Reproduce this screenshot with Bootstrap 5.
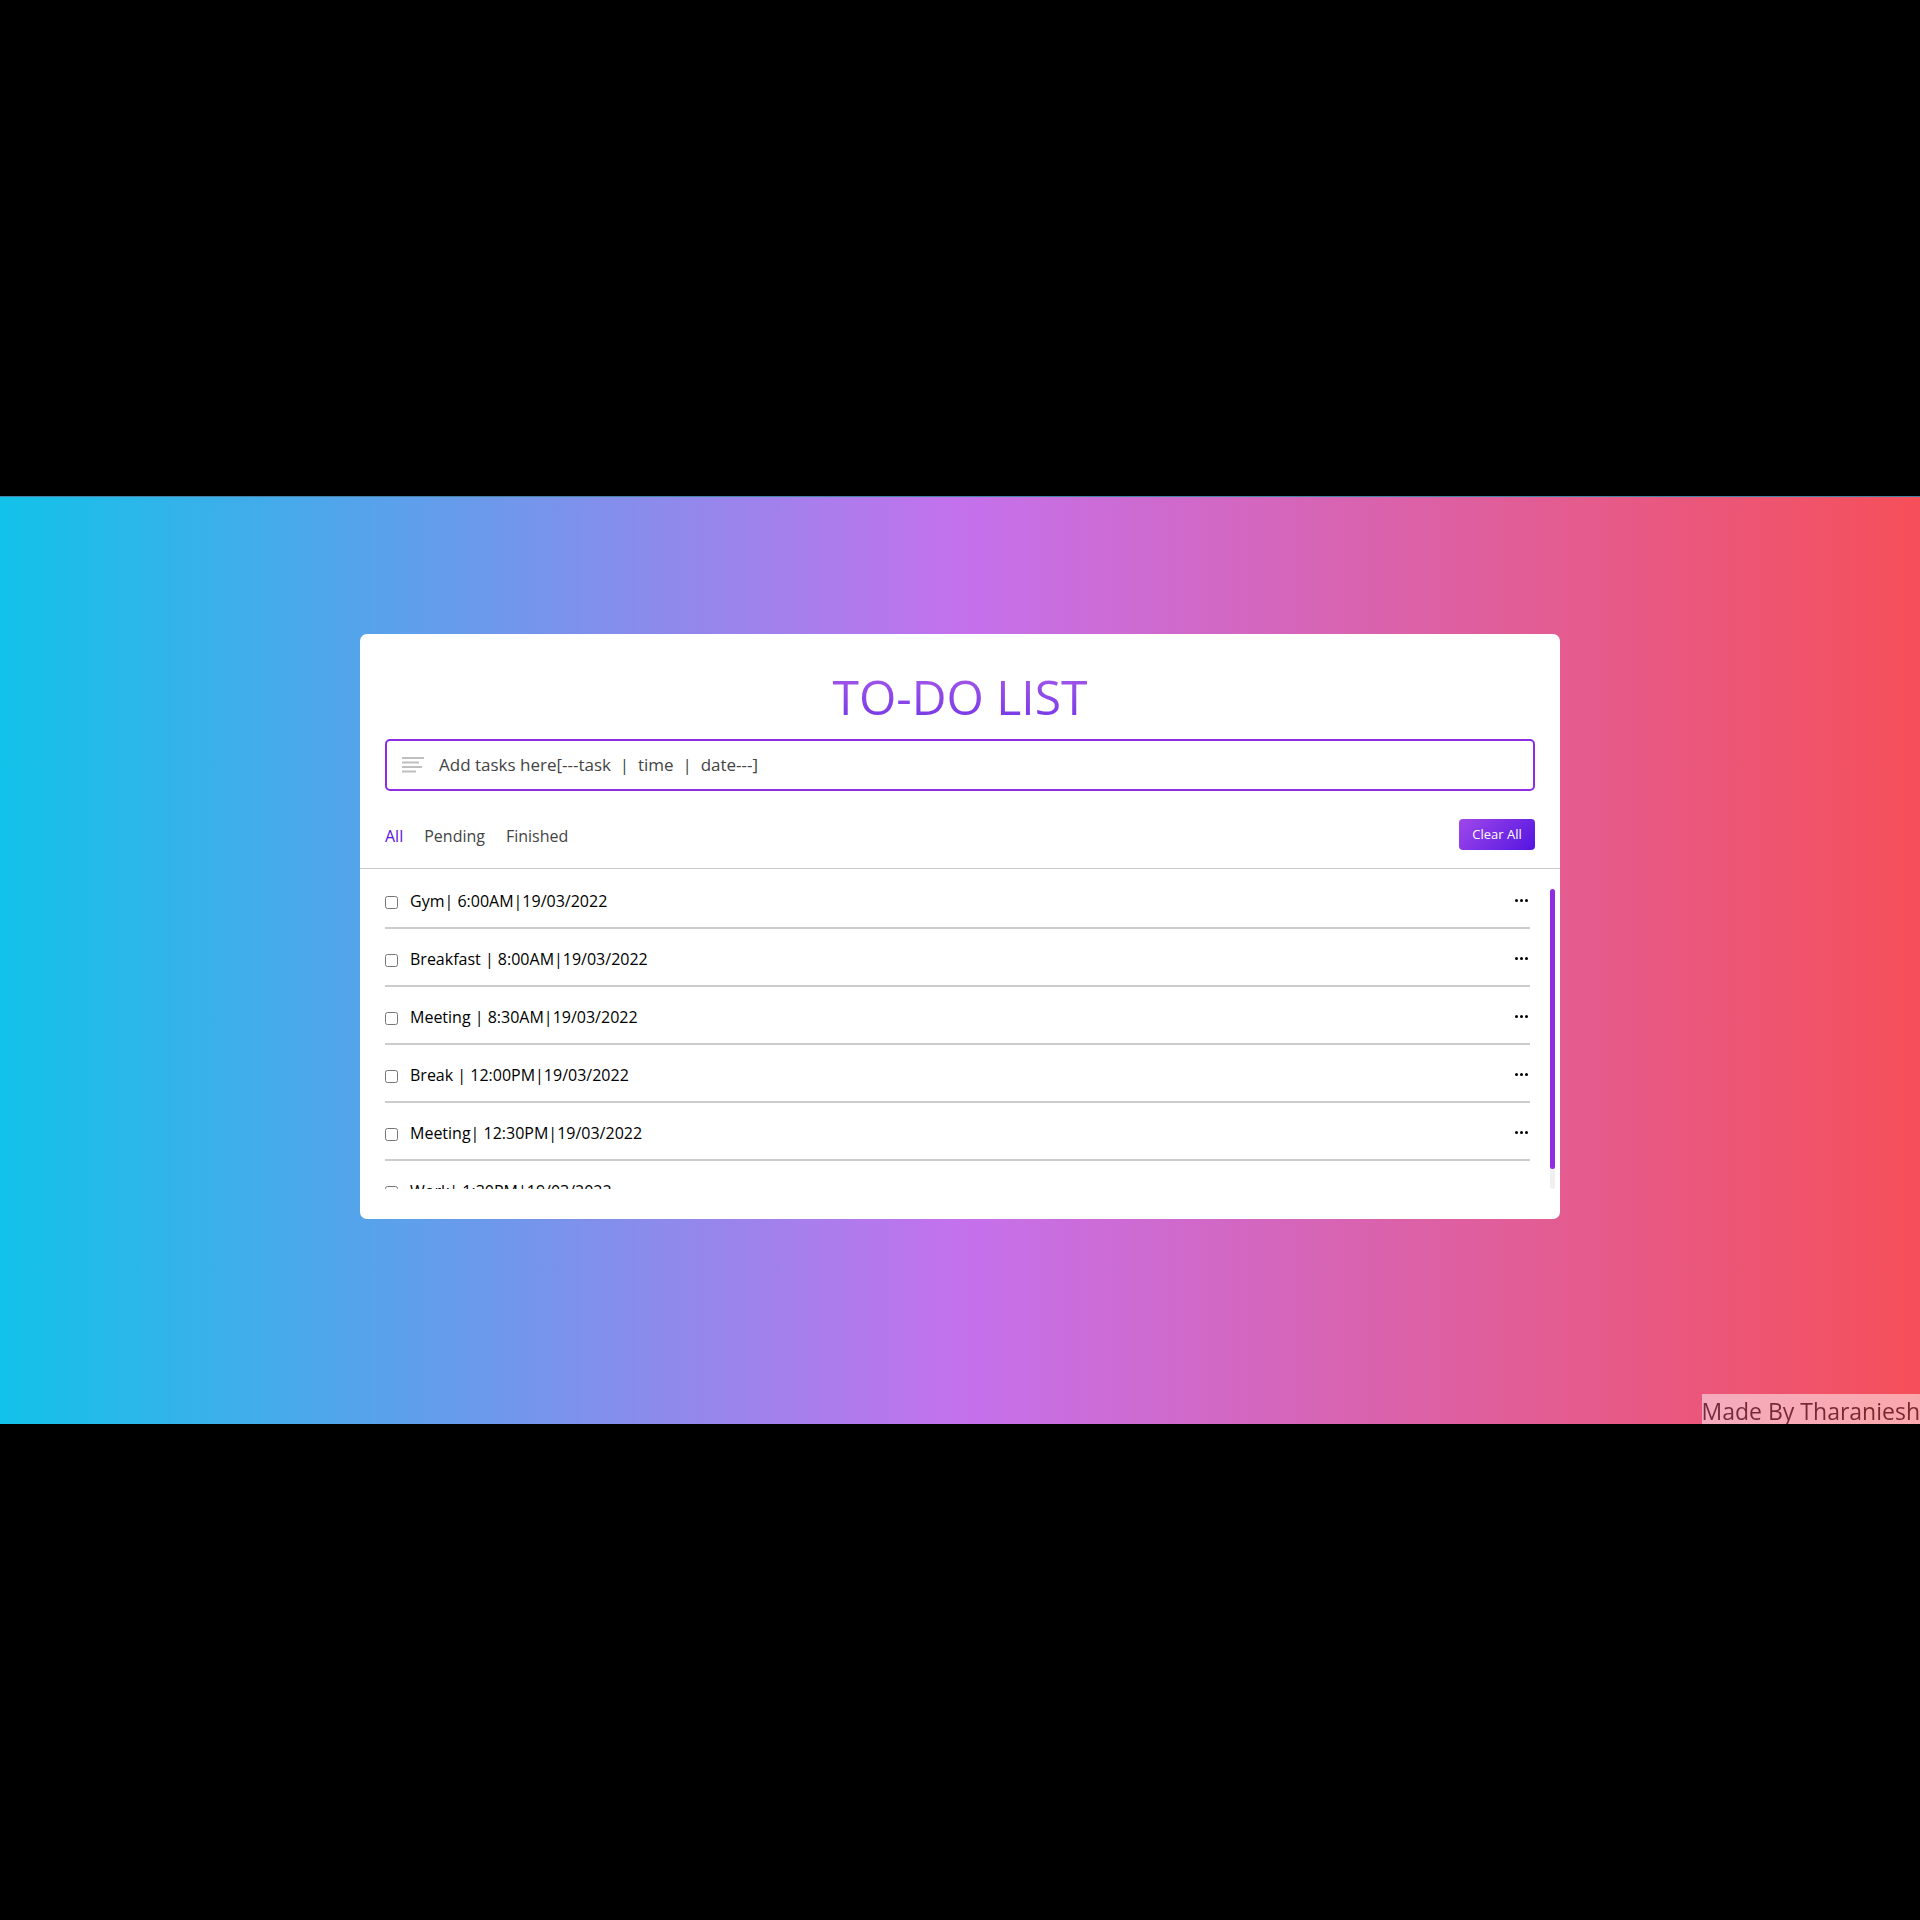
<!DOCTYPE html>
<html lang="en">
<head>
<meta charset="utf-8">
<meta name="viewport" content="width=device-width, initial-scale=1">
<title>To-Do List</title>
<link href="https://cdn.jsdelivr.net/npm/bootstrap@5.3.0/dist/css/bootstrap.min.css" rel="stylesheet">
<style>
  body { background: #000; font-family: "Open Sans", "Noto Sans", sans-serif; color: #000; }
  .stage { height: 928px; padding-top: 137px; border-top: 1px solid #4581a5; background: linear-gradient(to right, #12c2e9, #c471ed, #f64f59) padding-box; }
  .todo { width: 100%; max-width: 1200px; border-radius: 7px; padding: 28px 0 30px; }
  .todo-title { font-size: 48px; line-height: 70px; font-weight: 400; margin: 0 0 7px; background: linear-gradient(#b060ea, #6a30e6); -webkit-background-clip: text; background-clip: text; color: transparent; }
  .task-entry { margin: 0 25px; height: 52px; border: 2px solid #8e2de2; border-radius: 5px; padding-left: 15px; }
  .task-entry input { font-size: 17px; color: #444; padding: 0 15px; outline: 0; }
  .task-entry input::placeholder { color: #444; opacity: 1; }
  .controls { height: 78px; padding: 12px 25px 0; border-bottom: 1px solid #ccc; }
  .filters { gap: 21px; }
  .filter { font-size: 16px; color: #444; text-decoration: none; }
  .filter.active { color: #5a14e0; }
  .clear-btn { width: 76px; height: 31px; margin-bottom: 2px; border: 0; border-radius: 4px; font-size: 13px; color: #fff; background: linear-gradient(135deg, #9f48ea, #5415e0); }
  .task-area { height: 300px; margin: 20px 5px 0 25px; gap: 20px; }
  .task-row { height: 40px; padding-bottom: 14px; margin-bottom: 18px; border-bottom: 2px solid #ccc; font-size: 16px; }
  .task-row input { width: 13px; height: 13px; margin: 2px 12px 0 0; }
  .task-row .more { width: 16px; height: 16px; }
  .track { width: 5px; border-radius: 3px; background: #f0f0f0; }
  .thumb { height: 280px; border-radius: 3px; background: #8e2de2; }
  .credit { font-size: 23px; line-height: 34px; height: 30px; background: #fff; opacity: .5; }
</style>
</head>
<body class="min-vh-100 d-flex flex-column justify-content-center">
<main class="stage d-flex flex-column align-items-center justify-content-between">
  <section class="todo bg-white">
    <h1 class="todo-title text-center">TO-DO LIST</h1>
    <div class="task-entry d-flex align-items-center">
      <svg width="22" height="17" viewBox="0 0 22 17" aria-hidden="true"><path d="M0 1h22M0 5.500h17M0 10h20M0 14.500h14" stroke="#bfbfbf" stroke-width="2"/></svg>
      <input class="flex-grow-1 border-0 bg-transparent" type="text" aria-label="Add a task" placeholder="Add tasks here[---task  |  time  |  date---]">
    </div>
    <div class="controls d-flex align-items-center justify-content-between">
      <nav class="filters d-flex" aria-label="Task filters">
        <a class="filter active" href="#">All</a>
        <a class="filter" href="#">Pending</a>
        <a class="filter" href="#">Finished</a>
      </nav>
      <button class="clear-btn p-0" type="button">Clear All</button>
    </div>
    <div class="task-area d-flex">
      <ul class="list-unstyled flex-grow-1 m-0 overflow-hidden" id="tasks"></ul>
      <div class="track"><div class="thumb"></div></div>
    </div>
  </section>
  <footer class="credit align-self-end">Made By Tharaniesh</footer>
</main>
<script src="https://cdn.jsdelivr.net/npm/bootstrap@5.3.0/dist/js/bootstrap.bundle.min.js"></script>
<script>
  const tasks = ["Gym| 6:00AM|19/03/2022", "Breakfast | 8:00AM|19/03/2022", "Meeting | 8:30AM|19/03/2022", "Break | 12:00PM|19/03/2022", "Meeting| 12:30PM|19/03/2022", "Work| 1:30PM|19/03/2022"];
  document.getElementById("tasks").innerHTML = tasks.map((task, i) => `
    <li class="task-row d-flex align-items-center justify-content-between">
      <label class="d-flex align-items-center" for="task${i}"><input type="checkbox" id="task${i}">${task}</label>
      <button class="more btn p-0 border-0 d-flex" type="button" aria-label="Task options"><svg width="16" height="16" viewBox="0 0 16 16"><g fill="#000"><circle cx="2.500" cy="7.500" r="1.500"/><circle cx="7.500" cy="7.500" r="1.500"/><circle cx="12.500" cy="7.500" r="1.500"/></g></svg></button>
    </li>`).join("");
</script>
</body>
</html>
